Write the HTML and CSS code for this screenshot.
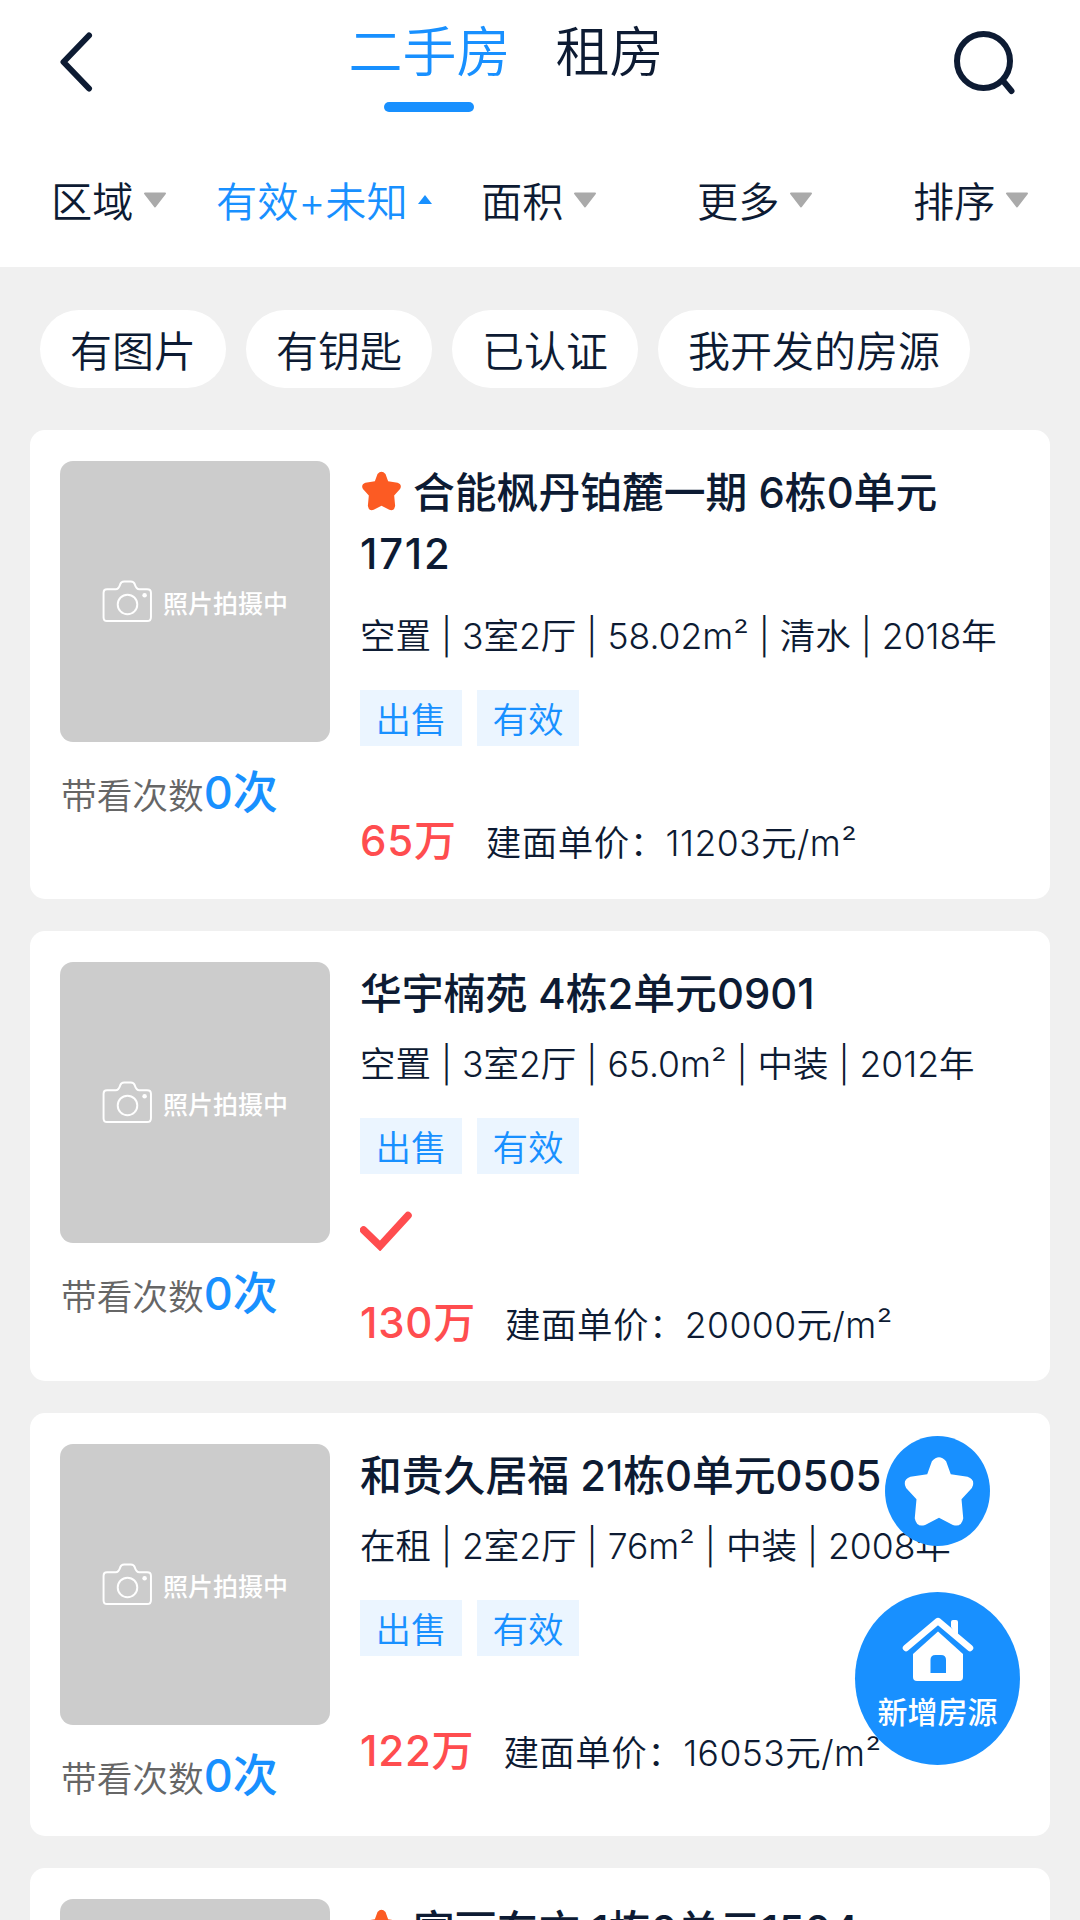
FILE: index.html
```html
<!DOCTYPE html>
<html lang="zh-CN">
<head>
<meta charset="utf-8">
<title>二手房</title>
<link rel="stylesheet" href="styles.css">
</head>
<body>
<svg class="defs" width="0" height="0" aria-hidden="true">
  <symbol id="star" viewBox="0 0 40 41"><path d="M15.900 3Q20-1.500 24.100 3L26.800 10.600L36.500 12Q41.500 14 39 18.500L33 25L34 36Q33 41.500 28 39.800L20 35.600L12 39.800Q7 41.500 6 36L7 25L1 18.500Q-1.500 14 3.500 12L13.200 10.600Z" fill="currentColor"/></symbol>
  <symbol id="camera" viewBox="0 0 52 44"><g fill="none" stroke="#fff" stroke-width="2"><path d="M5 9.500H14C17 9.500 17.500 7.500 18.500 4.500C19.300 2 20.500 1.500 22.500 1.500H29.500C31.500 1.500 32.700 2 33.500 4.500C34.500 7.500 35 9.500 38 9.500H46Q50 9.500 50 13V38Q50 42 46 42H5Q1.500 42 1.500 38V13Q1.500 9.500 5 9.500Z"/><circle cx="26" cy="25" r="10"/></g><circle cx="43.500" cy="15.500" r="2.300" fill="#fff"/></symbol>
  <symbol id="caret" viewBox="0 0 24 16"><path d="M2 1.500H22L12 14.500Z" fill="#aaa" stroke="#aaa" stroke-width="2" stroke-linejoin="round"/></symbol>
</svg>
<div class="screen">
  <header class="top">
    <svg class="back" viewBox="0 0 34 62"><path d="M30 4.500L4.500 31L30 57.500" fill="none" stroke="#0d1b33" stroke-width="6" stroke-linecap="round" stroke-linejoin="round"/></svg>
    <nav class="tabs"><a class="tab active">二手房</a><a class="tab">租房</a></nav>
    <svg class="search" viewBox="0 0 64 66"><g fill="none" stroke="#0d1b33" stroke-width="6" stroke-linecap="round"><ellipse cx="31.500" cy="30" rx="26.500" ry="27"/><path d="M52 51L59.500 60"/></g></svg>
  </header>
  <div class="filters">
    <span class="filter">区域<svg class="caret"><use href="#caret"/></svg></span>
    <span class="filter on">有效+未知<svg class="up" viewBox="0 0 14 9"><path d="M0 9L7 0L14 9Z" fill="#1890ff"/></svg></span>
    <span class="filter">面积<svg class="caret"><use href="#caret"/></svg></span>
    <span class="filter">更多<svg class="caret"><use href="#caret"/></svg></span>
    <span class="filter">排序<svg class="caret"><use href="#caret"/></svg></span>
  </div>
  <div class="chips"><span class="chip">有图片</span><span class="chip">有钥匙</span><span class="chip">已认证</span><span class="chip">我开发的房源</span></div>
  <main class="list">
    <article class="card">
      <div class="side">
        <div class="photo"><svg class="camera"><use href="#camera"/></svg>照片拍摄中</div>
        <p class="visits">带看次数<b>0次</b></p>
      </div>
      <div class="body">
        <h2 class="title long"><svg class="mark"><use href="#star"/></svg>合能枫丹铂麓一期 6栋0单元<br><span class="room">1712</span></h2>
        <p class="info">空置 | 3室2厅 | 58.02m² | 清水 | 2018年</p>
        <div class="tags"><span class="tag">出售</span><span class="tag">有效</span></div>
        <p class="price"><b>65万</b><span>建面单价：11203元/m²</span></p>
      </div>
    </article>
    <article class="card">
      <div class="side">
        <div class="photo"><svg class="camera"><use href="#camera"/></svg>照片拍摄中</div>
        <p class="visits">带看次数<b>0次</b></p>
      </div>
      <div class="body">
        <h2 class="title">华宇楠苑 4栋2单元0901</h2>
        <p class="info">空置 | 3室2厅 | 65.0m² | 中装 | 2012年</p>
        <div class="tags"><span class="tag">出售</span><span class="tag">有效</span></div>
        <svg class="check" viewBox="0 0 52 40"><path d="M3.500 19L20 35L48 4.500" fill="none" stroke="#ff4d4f" stroke-width="7.500" stroke-linecap="round"/></svg>
        <p class="price"><b>130万</b><span>建面单价：20000元/m²</span></p>
      </div>
    </article>
    <article class="card">
      <div class="side">
        <div class="photo"><svg class="camera"><use href="#camera"/></svg>照片拍摄中</div>
        <p class="visits">带看次数<b>0次</b></p>
      </div>
      <div class="body">
        <h2 class="title">和贵久居福 21栋0单元0505</h2>
        <p class="info">在租 | 2室2厅 | 76m² | 中装 | 2008年</p>
        <div class="tags"><span class="tag">出售</span><span class="tag">有效</span></div>
        <p class="price"><b>122万</b><span>建面单价：16053元/m²</span></p>
      </div>
    </article>
    <article class="card">
      <div class="side">
        <div class="photo"><svg class="camera"><use href="#camera"/></svg>照片拍摄中</div>
      </div>
      <div class="body">
        <h2 class="title"><svg class="mark"><use href="#star"/></svg>富丽东方 1栋0单元1504</h2>
      </div>
    </article>
  </main>
  <button class="fab fav"><svg viewBox="0 0 40 41"><use href="#star"/></svg></button>
  <button class="fab add"><svg viewBox="0 0 72 66"><g fill="#fff"><path d="M36 14.500L61 37V60Q61 64 57 64H15Q11 64 11 60V37Z"/></g><path d="M4 32L36 4L68 32" fill="none" stroke="#1890ff" stroke-width="9" stroke-linejoin="round"/><path d="M49 10V5Q49 3 51 3H54Q56 3 56 5V20Z" fill="#fff"/><path d="M4 31L36 4L68 31" fill="none" stroke="#fff" stroke-width="6.500" stroke-linecap="round" stroke-linejoin="round"/><path d="M28.500 56V43Q28.500 38 33.500 38H39Q44 38 44 43V56Z" fill="#1890ff"/></svg>新增房源</button>
</div>
</body>
</html>
```
FILE: styles.css
```css
* { box-sizing: border-box; margin: 0; padding: 0; }
body { background: #f0f0f0; color: #0d1b33; font-family: Inter, "Noto Sans CJK SC", sans-serif; font-weight: 350; }
.defs { position: absolute; }
.screen { position: relative; width: 1080px; height: 1920px; overflow: hidden; }
.top { height: 130px; background: #fff; display: flex; justify-content: space-between; align-items: flex-start; padding: 31px 64px 0 59px; }
.back { width: 34px; height: 62px; }
.tabs { display: flex; gap: 45px; margin-left: -33px; }
.tab { position: relative; font-size: 54px; line-height: 44px; height: 81px; }
.active { color: #1890ff; }
.active::after { content: ""; position: absolute; left: 35px; top: 71px; width: 90px; height: 10px; border-radius: 5px; background: #1890ff; }
.search { width: 64px; height: 66px; }
.filters { height: 137px; background: #fff; display: grid; grid-template-columns: 165px 265px 216px 216px 1fr; padding: 42px 0 0 51px; font-size: 41.2px; line-height: 60px; }
.filter { display: flex; align-items: center; gap: 9.5px; white-space: nowrap; height: 60px; }
.filter.on { color: #1890ff; }
.caret { width: 24px; height: 16px; margin-top: -4px; }
.up { width: 14px; height: 9px; margin: -5px 0 0 1px; }
.chips { display: flex; gap: 20px; padding: 43px 40px 41.5px; }
.chip { height: 78px; border-radius: 39px; background: #fff; padding: 0 30px; font-size: 42px; line-height: 83px; white-space: nowrap; }
.list { display: flex; flex-direction: column; gap: 31.500px; padding: 0 30px; }
.card { display: flex; gap: 30px; padding: 31.500px 30px 0; background: #fff; border-radius: 15px; }
.side { width: 270px; flex: none; }
.photo { height: 281px; border-radius: 13px; background: #ccc; color: #fff; display: flex; align-items: center; justify-content: center; gap: 10px; font-size: 25px; font-weight: 500; }
.camera { width: 51px; height: 43px; }
.visits { height: 111px; padding: 20.5px 0 0 1px; font-size: 35.7px; line-height: 60px; color: #666; white-space: nowrap; }
.visits b { color: #1890ff; font-weight: 450; font-size: 45px; }
.body { flex: 1; white-space: nowrap; padding-bottom: 30px; }
.title { padding-top: 2px; font-size: 41.800px; line-height: 61px; font-weight: 450; }
.room { letter-spacing: 1.8px; }
.mark { width: 39px; height: 40px; color: #fc5b23; margin: 0 12px 0 2px; vertical-align: -3px; }
.info { margin-top: 15px; font-size: 35.5px; line-height: 50px; }
.long + .info { margin-top: 27px; }
.tags { display: flex; gap: 15px; margin-top: 28px; }
.tag { width: 102px; height: 56px; background: #ebf5ff; color: #1890ff; text-align: center; font-size: 35.5px; line-height: 61px; }
.check { display: block; width: 52px; height: 40px; margin: 37px 0 -23px; }
.price { display: flex; align-items: baseline; margin-top: 70px; line-height: 50px; font-size: 35.500px; letter-spacing: .45px; }
.price b { color: #ff4d4f; font-size: 42px; font-weight: 450; letter-spacing: .8px; margin-right: 29px; }
.fab { position: absolute; border: 0; border-radius: 50%; background: #1890ff; color: #fff; font: 500 30px "Noto Sans CJK SC", sans-serif; display: flex; flex-direction: column; align-items: center; }
.fav { left: 885px; top: 1436px; width: 105px; height: 110px; padding-top: 20px; padding-left: 3px; }
.fav svg { width: 70px; height: 71px; }
.add { left: 855px; top: 1592px; width: 165px; height: 173px; padding-top: 25px; line-height: 44px; white-space: nowrap; }
.add svg { width: 72px; height: 66px; margin-bottom: 5px; }
```
